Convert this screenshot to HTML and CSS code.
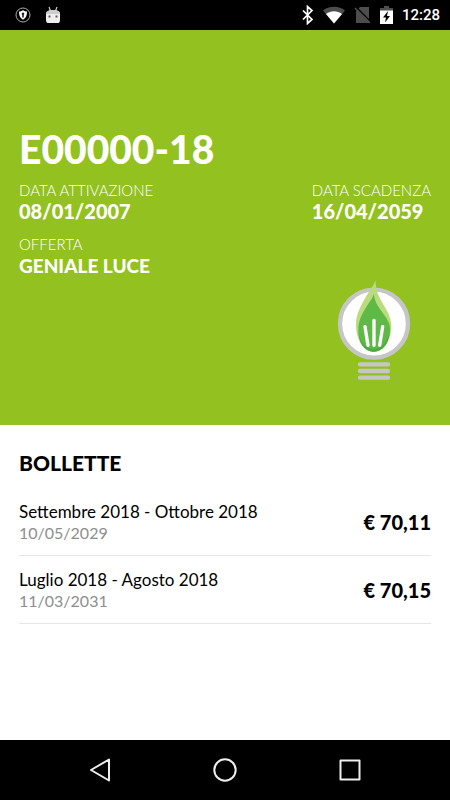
FILE: index.html
```html
<!DOCTYPE html>
<html lang="it">
<head>
    <meta charset="UTF-8">
    <meta name="viewport" content="width=device-width, initial-scale=1.0">
    <title>Contratto E00000-18</title>
    <link rel="stylesheet" href="styles.css">
</head>
<body>
    <div class="status-bar">
        <div class="status-left">
            <svg width="16" height="16" viewBox="0 0 16 16">
                <circle cx="8" cy="8" r="7" fill="none" stroke="#aaa"/>
                <path d="M8 3.2c1.4.9 2.7 1.2 4 1.3 0 4-1 6.6-4 8.3-3-1.7-4-4.300-4-8.300 1.300-.1 2.600-.4 4-1.300z" fill="#fff"/>
                <path d="M8 5.500a1.400 1.400 0 0 1 .8 2.500v2.500H7.200V8A1.400 1.400 0 0 1 8 5.500z" fill="#222"/>
            </svg>
            <svg width="16" height="18" viewBox="0 0 16 18">
                <path d="M4 1l1.500 4M12 1l-1.500 4" stroke="#ccc" stroke-width="1.200"/>
                <path d="M1 8c0-3 3-4 7-4s7 1 7 4v6c0 2.500-1 3-3 3H4c-2 0-3-.5-3-3z" fill="#eee"/>
                <path d="M1 8c0-3 3-4 7-4s7 1 7 4z" fill="#ccc"/>
                <path d="M3.500 9.500h2v2h-2zM10.500 9.500h2v2h-2z" fill="#555"/>
            </svg>
        </div>
        <div class="status-right">
            <svg width="12" height="20" viewBox="0 0 12 20">
                <path d="M1 5.500l9 9-4.500 4V1.500l4.500 4-9 9" fill="none" stroke="#fff" stroke-width="1.700"/>
            </svg>
            <svg width="22" height="18" viewBox="0 0 22 18">
                <path d="M0 4.500C6-.5 16-.5 22 4.500L11 17.500z" fill="#4d4d4d"/>
                <path d="M3 8c5-3.600 11-3.600 16 0l-8 9.500z" fill="#fff"/>
            </svg>
            <svg width="17" height="18" viewBox="0 0 17 18">
                <path d="M6 1h9v16H2V5z" fill="#4d4d4d"/>
                <path d="M2 1l15 15" stroke="#000" stroke-width="1.500"/>
                <path d="M1 2l15 15" stroke="#4d4d4d" stroke-width="1.500"/>
            </svg>
            <svg width="13" height="18" viewBox="0 0 13 18">
                <path d="M4 0h5v2h4v3H0V2h4z" fill="#4d4d4d"/>
                <path d="M0 4.500h13V18H0z" fill="#fff"/>
                <path d="M8 5L3 11.500h3L5 16.500l5-6.500H7z" fill="#000"/>
            </svg>
            <span class="clock">12:28</span>
        </div>
    </div>

    <header class="contract">
        <h1>E00000-18</h1>
        <dl class="details">
            <div>
                <dt>DATA ATTIVAZIONE</dt>
                <dd>08/01/2007</dd>
            </div>
            <div>
                <dt>DATA SCADENZA</dt>
                <dd>16/04/2059</dd>
            </div>
            <div>
                <dt>OFFERTA</dt>
                <dd class="offer">GENIALE LUCE</dd>
            </div>
        </dl>
        <svg class="bulb" width="74" height="101" viewBox="50 30 222 303">
            <circle cx="161" cy="161" r="102" fill="#fff" stroke="#c6c6c8" stroke-width="13"/>
            <path d="M166 31C157 56 107 112 107 163c0 48 22 82 53 82s53-34 53-78c0-50-49-76-47-136z" fill="#bbdc7c"/>
            <path d="M161 71C154 96 115 128 114 178c0 40 18 67 46 67s49-28 49-70c0-36-47-60-48-104z" fill="#5fb947"/>
            <path d="M114 178c2 40 22 59 46 59s46-22 49-62c0 42-20 70-49 70s-46-27-46-67z" fill="#4ea948"/>
            <path d="M161 151v75M134 170l9 56M187 170l-9 56" stroke="#fff" stroke-width="10" stroke-linecap="round"/>
            <path d="M119 283h84M119 303h84M119 323h84" stroke="#c6c6c8" stroke-width="13" stroke-linecap="round"/>
        </svg>
    </header>

    <main class="bills">
        <h2>BOLLETTE</h2>
        <ul>
            <li>
                <div>
                    <p>Settembre 2018 - Ottobre 2018</p>
                    <p class="date">10/05/2029</p>
                </div>
                <strong>€ 70,11</strong>
            </li>
            <li>
                <div>
                    <p>Luglio 2018 - Agosto 2018</p>
                    <p class="date">11/03/2031</p>
                </div>
                <strong>€ 70,15</strong>
            </li>
        </ul>
    </main>

    <nav class="nav-bar">
        <button type="button" aria-label="Indietro">
            <svg width="26" height="26" viewBox="0 0 26 26"><path d="M22 2.500v21L4 13z"/></svg>
        </button>
        <button type="button" aria-label="Home">
            <svg width="26" height="26" viewBox="0 0 26 26"><circle cx="13" cy="13" r="10.700"/></svg>
        </button>
        <button type="button" aria-label="Recenti">
            <svg width="26" height="26" viewBox="0 0 26 26"><path d="M3.500 3.500h19v19h-19z"/></svg>
        </button>
    </nav>
</body>
</html>
```
FILE: styles.css
```css
* { box-sizing: border-box; margin: 0; padding: 0; }
body { display: flex; flex-direction: column; min-height: 100vh; background: #fff; color: #000; font-family: Lato, sans-serif; }
svg { display: block; }

.status-bar { display: flex; justify-content: space-between; align-items: center; height: 30px; padding: 0 10px 0 15px; background: #000; color: #fff; }
.status-left { display: flex; align-items: center; gap: 14px; }
.status-right { display: flex; align-items: center; gap: 9px; }
.clock { font: 500 15px Roboto, sans-serif; }

.contract { padding: 95px 19px 44px; background: #93c11f; color: #fff; }
.contract h1 { font-size: 39px; font-weight: 900; line-height: 48px; }
.details { display: grid; grid-template-columns: 1fr auto; gap: 12px; margin-top: 7px; }
.details dt { font-size: 15px; font-weight: 300; line-height: 21px; }
.details dd { font-size: 20px; font-weight: 900; line-height: 21px; }
.details .offer { font-size: 19px; }
.bulb { margin: 4px 20px 0 auto; }

.bills { flex: 1; padding: 26px 19px; }
.bills h2 { margin-bottom: 13px; font-size: 21px; font-weight: 900; line-height: 24px; }
.bills ul { list-style: none; }
.bills li { display: flex; justify-content: space-between; align-items: center; padding: 13px 0 12px; border-bottom: 1px solid #e6e6e6; }
.bills p { font-size: 17px; line-height: 21px; }
.bills .date { font-size: 16px; color: #8e8e8e; }
.bills strong { font-size: 20px; font-weight: 900; }

.nav-bar { display: flex; justify-content: space-around; align-items: center; height: 60px; padding: 0 38px; background: #000; }
.nav-bar button { padding: 4px; border: none; background: none; cursor: pointer; }
.nav-bar svg { fill: none; stroke: #eee; stroke-width: 2; stroke-linejoin: round; }
```
